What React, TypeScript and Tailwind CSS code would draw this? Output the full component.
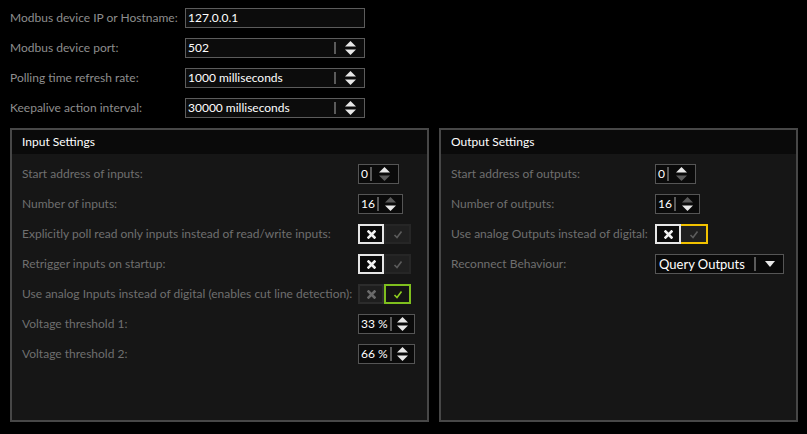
import React from 'react';

const font = { fontFamily: 'Lato, "Noto Sans", sans-serif' };

function Arrows({ up = true, down = true }: { up?: boolean; down?: boolean }) {
  return (
    <svg width="11" height="14" viewBox="0 0 11 14" className="block">
      <polygon points="5.5,0 11,5.5 0,5.5" fill={up ? '#e8e8e8' : '#5a5a5a'} />
      <polygon points="0,8.5 11,8.5 5.5,14" fill={down ? '#e8e8e8' : '#5a5a5a'} />
    </svg>
  );
}

function TopField({ value, spin }: { value: string; spin?: boolean }) {
  return (
    <div className="flex h-[20px] w-[180px] items-center border border-[#5c5c5c] bg-[#0c0c0c]">
      <span className="flex-1 pl-[2px] text-[12px] leading-none text-white">{value}</span>
      {spin && (
        <>
          <span className="h-[12px] w-[2px] bg-[#5a5a5a]" />
          <span className="flex w-[28px] justify-center">
            <Arrows />
          </span>
        </>
      )}
    </div>
  );
}

function SpinBox({ value, width, up, down }: { value: string; width: string; up?: boolean; down?: boolean }) {
  return (
    <div className={`flex h-[20px] items-center border border-[#555] bg-[#0a0a0a] ${width}`}>
      <span className="pl-[2px] text-[12px] leading-none whitespace-nowrap text-white">{value}</span>
      <span className="ml-[2px] h-[14px] w-[2px] bg-[#5a5a5a]" />
      <span className="flex flex-1 justify-center">
        <Arrows up={up} down={down} />
      </span>
    </div>
  );
}

function Cross({ color }: { color: string }) {
  return (
    <svg width="9" height="9" viewBox="0 0 9 9" className="block">
      <path d="M1.5 1.5 L7.5 7.5 M7.5 1.5 L1.5 7.5" stroke={color} strokeWidth="2.6" strokeLinecap="square" />
    </svg>
  );
}

function Check({ color }: { color: string }) {
  return (
    <svg width="10" height="9" viewBox="0 0 10 9" className="block">
      <path d="M1.5 5 L4 7.5 L8.5 1.5" stroke={color} strokeWidth="1.6" fill="none" />
    </svg>
  );
}

function Toggle({ mode }: { mode: 'off' | 'on' | 'offFocus' }) {
  if (mode === 'on') {
    return (
      <div className="flex h-[20px] w-[53px]">
        <div className="flex w-[26px] items-center justify-center border-2 border-[#2c2c2c] bg-[#1e1e1e]">
          <Cross color="#6a6a6a" />
        </div>
        <div className="flex w-[27px] items-center justify-center border-2 border-[#7fbf1e] bg-[#141414]">
          <Check color="#8fd020" />
        </div>
      </div>
    );
  }
  return (
    <div className="flex h-[20px] w-[53px]">
      <div className="flex w-[26px] items-center justify-center border-2 border-[#e6e6e6] bg-[#0a0a0a]">
        <Cross color="#f0f0f0" />
      </div>
      <div
        className={`flex w-[27px] items-center justify-center border-2 bg-[#202020] ${
          mode === 'offFocus' ? 'border-[#f2c200] border-l-0' : 'border-[#262626]'
        }`}
      >
        <Check color="#5c5c5c" />
      </div>
    </div>
  );
}

function Row({ label, labelW, children }: { label: string; labelW: string; children: React.ReactNode }) {
  return (
    <div className="flex h-[20px] shrink-0 items-center">
      <span className={`${labelW} whitespace-nowrap text-[12px] text-[#6f6f6f]`}>{label}</span>
      {children}
    </div>
  );
}

function Panel({ title, width, children }: { title: string; width: string; children: React.ReactNode }) {
  return (
    <div className={`flex h-[294px] flex-col overflow-hidden border-2 border-[#474747] bg-[#161616] ${width}`}>
      <div className="flex h-[24px] shrink-0 items-center bg-[#0a0a0a] pl-[10px] text-[12px] text-white">{title}</div>
      <div className="flex flex-col gap-[10px] pl-[10px] pt-[10px]">{children}</div>
    </div>
  );
}

export default function App() {
  const top = [
    { label: 'Modbus device IP or Hostname:', value: '127.0.0.1', spin: false },
    { label: 'Modbus device port:', value: '502', spin: true },
    { label: 'Polling time refresh rate:', value: '1000 milliseconds', spin: true },
    { label: 'Keepalive action interval:', value: '30000 milliseconds', spin: true },
  ];

  return (
    <div className="flex h-[434px] w-[807px] flex-col overflow-hidden bg-black" style={font}>
      <div className="flex shrink-0 flex-col gap-[10px] pl-[10px] pt-[8px]">
        {top.map((r) => (
          <div key={r.label} className="flex h-[20px] items-center">
            <span className="w-[175px] whitespace-nowrap text-[12px] text-[#8e8e8e]">{r.label}</span>
            <TopField value={r.value} spin={r.spin} />
          </div>
        ))}
      </div>

      <div className="flex shrink-0 items-start gap-[10px] pl-[10px] pt-[10px]">
        <Panel title="Input Settings" width="w-[419px]">
          <Row label="Start address of inputs:" labelW="w-[336px]">
            <SpinBox value="0" width="w-[41px]" up down={false} />
          </Row>
          <Row label="Number of inputs:" labelW="w-[336px]">
            <SpinBox value="16" width="w-[45px]" up={false} down />
          </Row>
          <Row label="Explicitly poll read only inputs instead of read/write inputs:" labelW="w-[336px]">
            <Toggle mode="off" />
          </Row>
          <Row label="Retrigger inputs on startup:" labelW="w-[336px]">
            <Toggle mode="off" />
          </Row>
          <Row label="Use analog Inputs instead of digital (enables cut line detection):" labelW="w-[336px]">
            <Toggle mode="on" />
          </Row>
          <Row label="Voltage threshold 1:" labelW="w-[336px]">
            <SpinBox value="33 %" width="w-[57px]" />
          </Row>
          <Row label="Voltage threshold 2:" labelW="w-[336px]">
            <SpinBox value="66 %" width="w-[57px]" />
          </Row>
        </Panel>

        <Panel title="Output Settings" width="w-[359px]">
          <Row label="Start address of outputs:" labelW="w-[204px]">
            <SpinBox value="0" width="w-[41px]" up down={false} />
          </Row>
          <Row label="Number of outputs:" labelW="w-[204px]">
            <SpinBox value="16" width="w-[45px]" up={false} down />
          </Row>
          <Row label="Use analog Outputs instead of digital:" labelW="w-[204px]">
            <Toggle mode="offFocus" />
          </Row>
          <Row label="Reconnect Behaviour:" labelW="w-[204px]">
            <div className="flex h-[20px] w-[129px] items-center border border-[#555] bg-[#0a0a0a]">
              <span className="flex-1 pl-[3px] text-[13px] leading-none text-white">Query Outputs</span>
              <span className="h-[14px] w-[2px] bg-[#5a5a5a]" />
              <span className="flex w-[27px] justify-center">
                <svg width="10" height="6" viewBox="0 0 10 6" className="block">
                  <polygon points="0,0 10,0 5,6" fill="#e8e8e8" />
                </svg>
              </span>
            </div>
          </Row>
        </Panel>
      </div>
    </div>
  );
}
